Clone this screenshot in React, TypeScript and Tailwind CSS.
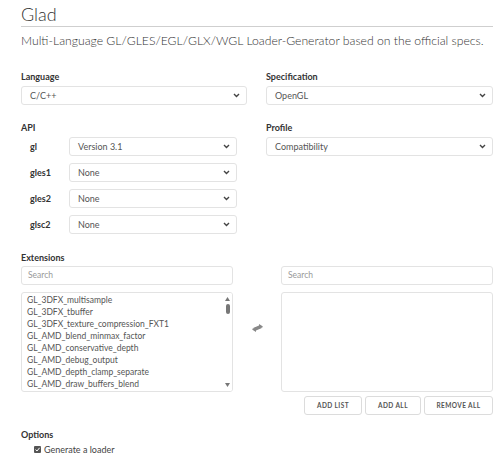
import React from "react";

const FONT = { fontFamily: "Lato, 'Open Sans', sans-serif" };

const extensions = [
    "GL_3DFX_multisample",
    "GL_3DFX_tbuffer",
    "GL_3DFX_texture_compression_FXT1",
    "GL_AMD_blend_minmax_factor",
    "GL_AMD_conservative_depth",
    "GL_AMD_debug_output",
    "GL_AMD_depth_clamp_separate",
    "GL_AMD_draw_buffers_blend",
    "GL_AMD_framebuffer_multisample_advanced",
];

function Chevron() {
    return (
        <svg width="7" height="5" viewBox="0 0 7 5" className="flex-shrink-0">
            <path d="M1 1 L3.5 3.5 L6 1" fill="none" stroke="#444" strokeWidth="1.4" />
        </svg>
    );
}

function Select({ value, className = "" }: { value: string; className?: string }) {
    return (
        <div
            className={`flex items-center justify-between h-[19px] pl-[8px] pr-[6px] bg-white border border-[#e3e3e3] rounded-[3px] text-[9px] text-[#555] ${className}`}
        >
            <span>{value}</span>
            <Chevron />
        </div>
    );
}

function Label({ children, className = "" }: { children: React.ReactNode; className?: string }) {
    return <div className={`text-[9px] font-bold text-[#333] leading-[12px] ${className}`}>{children}</div>;
}

function Search() {
    return (
        <div className="flex items-center h-[19px] px-[6px] bg-white border border-[#e3e3e3] rounded-[3px] text-[8.5px] text-[#999]">
            Search
        </div>
    );
}

function ApiRow({ name, value }: { name: string; value: string }) {
    return (
        <div className="flex items-start h-[26px]">
            <div className="w-[48px] pl-[9px] pt-[3px] text-[9px] font-bold text-[#333]">{name}</div>
            <Select value={value} className="w-[168px]" />
        </div>
    );
}

function Btn({ label, w }: { label: string; w: string }) {
    return (
        <div
            className={`flex items-center justify-center h-[19px] ${w} bg-white border border-[#dcdcdc] rounded-[3px] text-[6.5px] font-bold tracking-[0.4px] text-[#555]`}
        >
            {label}
        </div>
    );
}

export default function App() {
    return (
        <div className="w-[500px] h-[458px] bg-white overflow-hidden pl-[21px] pr-[7px]" style={FONT}>
            <h1 className="pt-[3px] text-[18px] font-light text-[#333] leading-[22px] pb-[1px] border-b border-[#cfcfcf]">
                Glad
            </h1>
            <p className="mt-[6px] text-[12.2px] font-light text-[#333] leading-[16px] whitespace-nowrap">
                Multi-Language GL/GLES/EGL/GLX/WGL Loader-Generator based on the official specs.
            </p>

            <div className="flex justify-between mt-[22px]">
                <div className="w-[226px]">
                    <Label>Language</Label>
                    <Select value="C/C++" className="mt-[3px]" />
                    <Label className="mt-[17px]">API</Label>
                    <div className="mt-[3px]">
                        <ApiRow name="gl" value="Version 3.1" />
                        <ApiRow name="gles1" value="None" />
                        <ApiRow name="gles2" value="None" />
                        <ApiRow name="glsc2" value="None" />
                    </div>
                </div>
                <div className="w-[227px]">
                    <Label>Specification</Label>
                    <Select value="OpenGL" className="mt-[3px]" />
                    <Label className="mt-[17px]">Profile</Label>
                    <Select value="Compatibility" className="mt-[3px]" />
                </div>
            </div>

            <Label className="mt-[11px]">Extensions</Label>
            <div className="flex mt-[2px]">
                <div className="w-[212px]">
                    <Search />
                    <div className="relative mt-[7px] h-[100px] border border-[#e3e3e3] rounded-[3px] overflow-hidden">
                        <div className="pl-[5px] pt-[1px] text-[8.5px] text-[#555] leading-[12px]">
                            {extensions.map((e) => (
                                <div key={e} className="whitespace-nowrap">
                                    {e}
                                </div>
                            ))}
                        </div>
                        <div className="absolute right-0 top-0 bottom-0 w-[9px] bg-white flex flex-col items-center">
                            <svg width="5" height="4" viewBox="0 0 5 4" className="mt-[4px]">
                                <path d="M0 4 L2.5 0 L5 4 Z" fill="#777" />
                            </svg>
                            <div className="mt-[3px] w-[4px] h-[10px] rounded-[2px] bg-[#777]" />
                            <div className="flex-1" />
                            <svg width="5" height="4" viewBox="0 0 5 4" className="mb-[4px]">
                                <path d="M0 0 L2.5 4 L5 0 Z" fill="#777" />
                            </svg>
                        </div>
                    </div>
                </div>
                <div className="w-[48px] flex items-start justify-center pt-[58px]">
                    <svg width="11" height="8" viewBox="0 0 11 8">
                        <path d="M0 4.5 L7 1.5 L7 0 L11 2.5 L7 5 Z" fill="#888" />
                        <path d="M11 3.5 L4 6.5 L4 8 L0 5.5 L4 3 Z" fill="#888" />
                    </svg>
                </div>
                <div className="w-[212px]">
                    <Search />
                    <div className="mt-[7px] h-[100px] border border-[#e3e3e3] rounded-[3px]" />
                    <div className="flex justify-end gap-[3px] mt-[4px]">
                        <Btn label="ADD LIST" w="w-[58px]" />
                        <Btn label="ADD ALL" w="w-[56px]" />
                        <Btn label="REMOVE ALL" w="w-[69px]" />
                    </div>
                </div>
            </div>

            <Label className="mt-[14px]">Options</Label>
            <div className="flex items-center mt-[2px] pl-[13px] text-[9px] text-[#444]">
                <svg width="7" height="7" viewBox="0 0 7 7" className="mr-[3px]">
                    <rect x="0" y="0" width="7" height="7" rx="1" fill="#555" />
                    <path d="M1.5 3.6 L3 5 L5.6 1.8" fill="none" stroke="#fff" strokeWidth="1" />
                </svg>
                Generate a loader
            </div>
        </div>
    );
}
